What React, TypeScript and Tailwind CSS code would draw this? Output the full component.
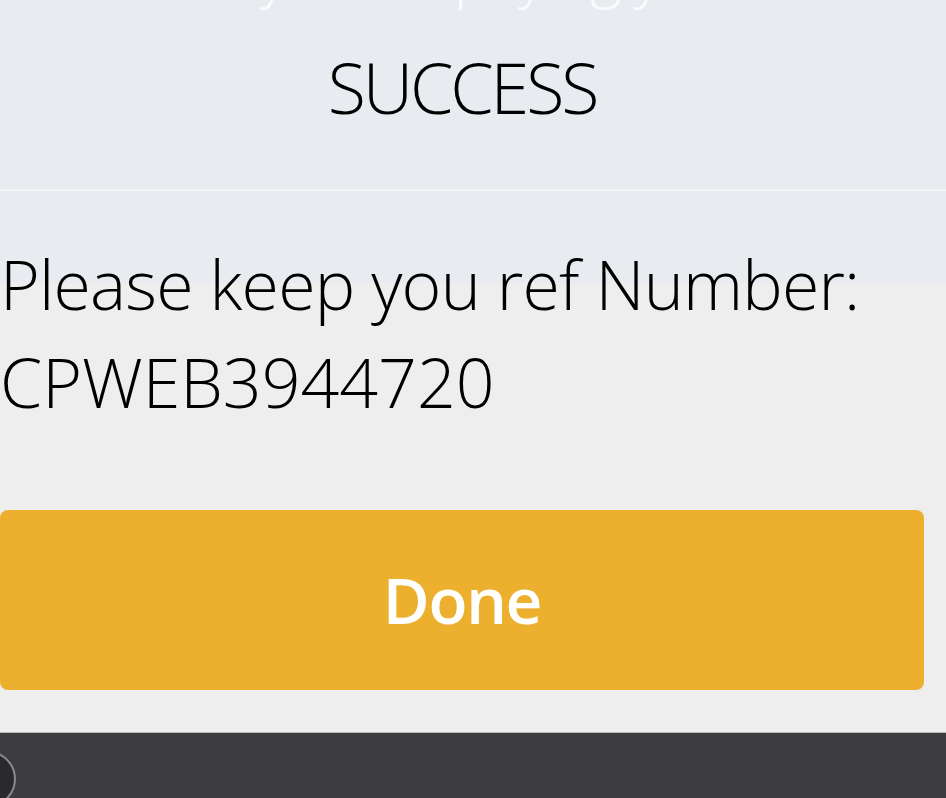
import React from 'react';

const font = { fontFamily: '"Open Sans", "Noto Sans", sans-serif' };

export default function App() {
  return (
    <div className="w-[946px] h-[798px] overflow-hidden flex flex-col bg-[#eeeeee]" style={font}>
      <header className="h-[191px] shrink-0 bg-[#e8ebef] border-b-2 border-[#f2f4f6] pr-[22px] flex flex-col items-center overflow-hidden">
        <p className="-mt-[62px] h-[62px] text-[60px] leading-[70px] font-light text-white/80 whitespace-nowrap tracking-tight">
          Thank you for paying your bill
        </p>
        <h1 className="mt-[52px] text-[70px] leading-[70px] font-light text-black tracking-[-0.045em]">SUCCESS</h1>
      </header>

      <main className="flex-1 flex flex-col bg-[linear-gradient(to_bottom,#e8ebef_0,#e8ebef_92px,#eeeeee_92px)]">
        <div className="pt-[44px] text-[68px] leading-[98px] font-light text-black whitespace-nowrap">
          <p className="tracking-[-0.012em]">Please keep you ref Number:</p>
          <p>CPWEB3944720</p>
        </div>

        <button className="mt-[79px] w-[924px] h-[180px] rounded-[8px] bg-[#ecb02e] text-white text-[64px] font-semibold tracking-[-0.02em] flex items-center justify-center">
          Done
        </button>

        <div className="flex-1" />
      </main>

      <footer className="h-[66px] shrink-0 bg-[#3d3d40] border-t border-[#b9b9bb] relative overflow-hidden">
        <div className="absolute -left-[40px] top-[18px] w-[56px] h-[56px] rounded-full bg-[#2a2a2c] border-2 border-[#8a8a8c]" />
      </footer>
    </div>
  );
}
